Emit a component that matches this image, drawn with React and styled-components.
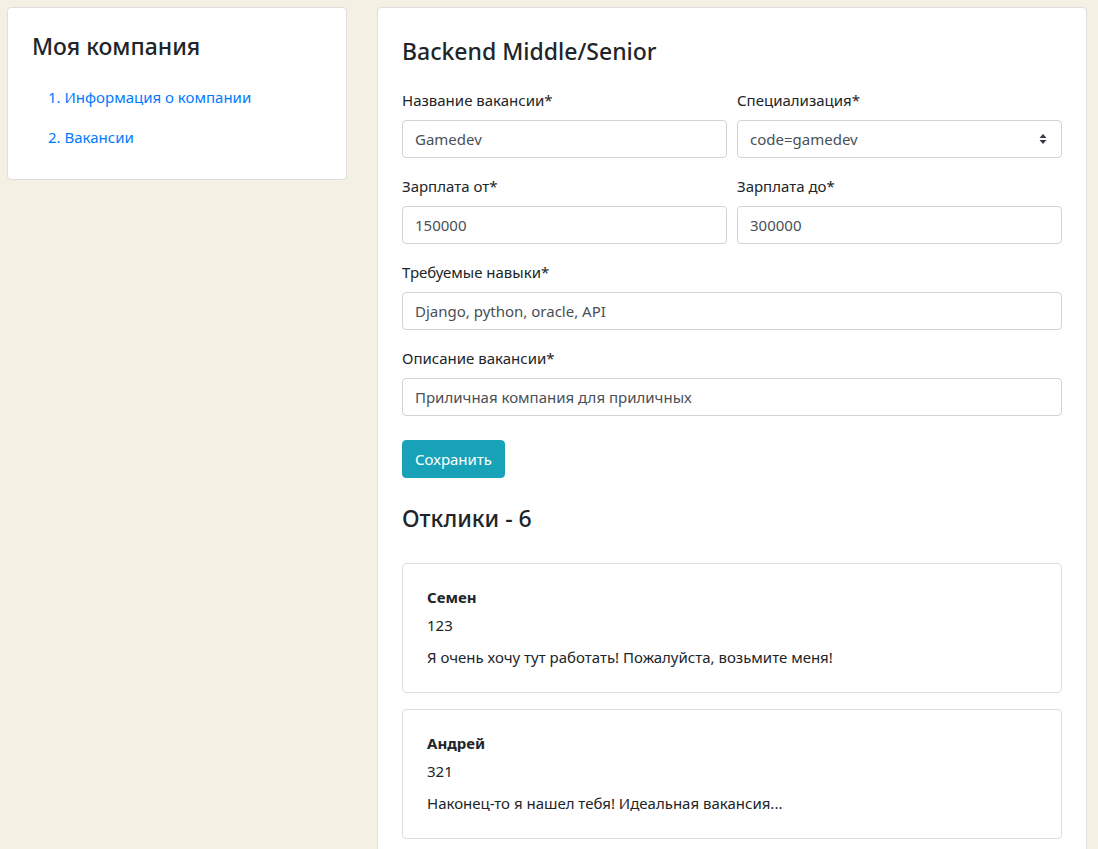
import React from 'react';
import styled, {createGlobalStyle} from 'styled-components';

const GlobalStyle = createGlobalStyle`
  body {
    margin: 0;
    background: #f5f0e4;
    font-family: "Noto Sans", "Open Sans", sans-serif;
    font-size: 15px;
    line-height: 24px;
    color: #212529;
  }
  * {
    box-sizing: border-box;
  }
`;

const responses = [
	{name: 'Семен', phone: '123', text: 'Я очень хочу тут работать! Пожалуйста, возьмите меня!'},
	{name: 'Андрей', phone: '321', text: 'Наконец-то я нашел тебя! Идеальная вакансия...'},
];

const SelectArrows = () => (
	<svg width="8" height="12" viewBox="0 0 8 12">
		<path d="M4 1 L7.5 5 H0.5 Z" fill="#343a40" />
		<path d="M4 11 L7.5 7 H0.5 Z" fill="#343a40" />
	</svg>
);

const App = () => {
	return (<Page>
			<GlobalStyle />
			<Card bottom="30px">
				<Title>Моя компания</Title>
				<Menu>
					<li><MenuLink href="#">1. Информация о компании</MenuLink></li>
					<li><MenuLink href="#">2. Вакансии</MenuLink></li>
				</Menu>
			</Card>

			<Card>
				<Title top="5px" bottom="22px">Backend Middle/Senior</Title>
				<FormGrid>
					<Field>
						<Label>Название вакансии*</Label>
						<Input defaultValue="Gamedev" />
					</Field>
					<Field>
						<Label>Специализация*</Label>
						<Select>
							<span>code=gamedev</span>
							<SelectArrows />
						</Select>
					</Field>
					<Field>
						<Label>Зарплата от*</Label>
						<Input defaultValue="150000" />
					</Field>
					<Field>
						<Label>Зарплата до*</Label>
						<Input defaultValue="300000" />
					</Field>
					<Field wide>
						<Label>Требуемые навыки*</Label>
						<Input defaultValue="Django, python, oracle, API" />
					</Field>
					<Field wide>
						<Label>Описание вакансии*</Label>
						<Input defaultValue="Приличная компания для приличных" />
					</Field>
				</FormGrid>
				<SaveButton>Сохранить</SaveButton>

				<Title top="26px" bottom="30px">Отклики - 6</Title>
				<Responses>
					{responses.map((r) => (
						<Response key={r.phone}>
							<Name>{r.name}</Name>
							<Phone>{r.phone}</Phone>
							<Message>{r.text}</Message>
						</Response>
					))}
				</Responses>
			</Card>
		</Page>
	);
};

export default App;

const Page = styled.div`
  display: grid;
  grid-template-columns: 340px 710px;
  gap: 30px;
  align-items: start;
  padding: 7px;
`;
const Card = styled.div`
  background: #fff;
  border: 1px solid #dedede;
  border-radius: 4px;
  padding: 24px 24px ${({bottom}) => bottom || '40px'};
`;
const Title = styled.h4`
  font-size: 23px;
  font-weight: 500;
  line-height: 29px;
  margin: ${({top}) => top || '0'} 0 ${({bottom}) => bottom || '24px'};
`;
const Menu = styled.ol`
  list-style: none;
  margin: 0;
  padding: 0 0 0 16px;
  display: flex;
  flex-direction: column;
  gap: 16px;
`;
const MenuLink = styled.a`
  color: #007bff;
  text-decoration: none;
`;
const FormGrid = styled.div`
  display: grid;
  grid-template-columns: 1fr 1fr;
  column-gap: 10px;
`;
const Field = styled.div`
  grid-column: ${({wide}) => (wide ? '1 / -1' : 'auto')};
  margin-bottom: 16px;
`;
const Label = styled.label`
  display: block;
  margin-bottom: 8px;
`;
const Input = styled.input`
  display: block;
  width: 100%;
  height: 38px;
  padding: 6px 12px;
  font-family: inherit;
  font-size: 15px;
  color: #495057;
  border: 1px solid #ced4da;
  border-radius: 4px;
  background: #fff;
`;
const Select = styled.div`
  display: flex;
  align-items: center;
  justify-content: space-between;
  height: 38px;
  padding: 6px 14px 6px 12px;
  color: #495057;
  border: 1px solid #ced4da;
  border-radius: 4px;
`;
const SaveButton = styled.button`
  display: block;
  margin-top: 8px;
  height: 38px;
  padding: 6px 12px;
  font-family: inherit;
  font-size: 15px;
  color: #fff;
  background: #17a2b8;
  border: 1px solid #17a2b8;
  border-radius: 4px;
`;
const Responses = styled.div`
  display: flex;
  flex-direction: column;
  gap: 16px;
`;
const Response = styled.div`
  border: 1px solid #dedede;
  border-radius: 4px;
  padding: 21px 24px 23px;
`;
const Name = styled.div`
  font-weight: 700;
  margin-bottom: 4px;
`;
const Phone = styled.div`
  margin-bottom: 8px;
`;
const Message = styled.div``;
